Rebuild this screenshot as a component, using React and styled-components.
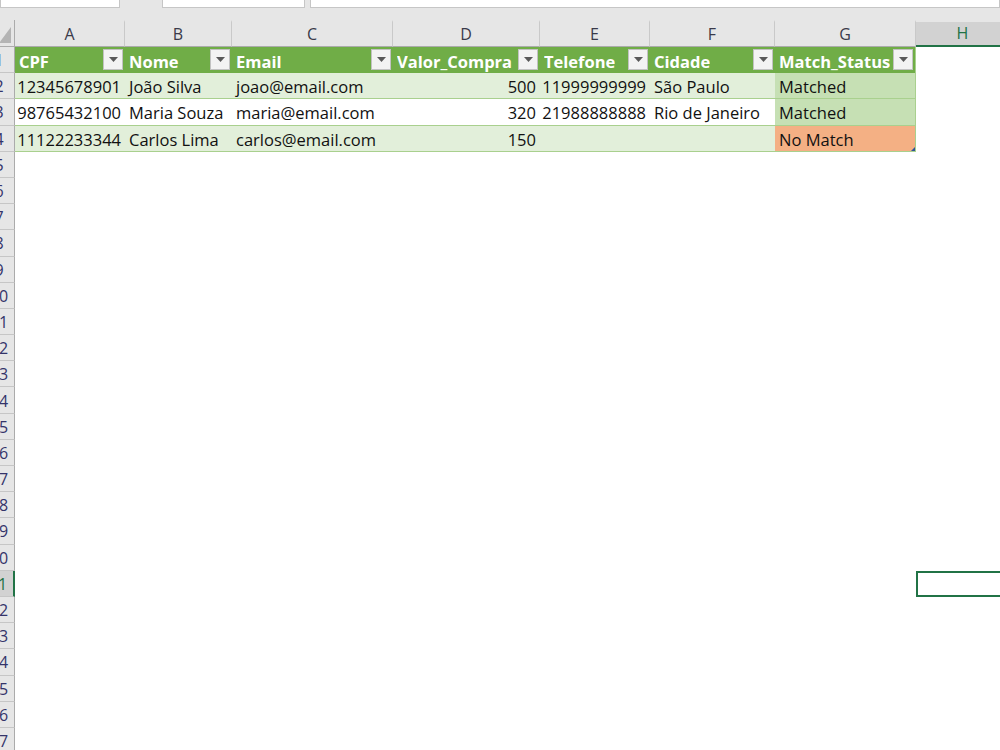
import styled, { createGlobalStyle } from "styled-components";

const GlobalStyle = createGlobalStyle`
  body {
    margin: 0;
    background: #ffffff;
    font-family: "Open Sans", "Liberation Sans", sans-serif;
  }
  * {
    box-sizing: border-box;
  }
`;

const COLUMNS = [
  { name: "A", width: 110 },
  { name: "B", width: 107 },
  { name: "C", width: 161 },
  { name: "D", width: 147 },
  { name: "E", width: 110 },
  { name: "F", width: 125 },
  { name: "G", width: 141 },
  { name: "H", width: 94 },
];

const TABLE_HEADERS = [
  "CPF",
  "Nome",
  "Email",
  "Valor_Compra",
  "Telefone",
  "Cidade",
  "Match_Status",
];

const TABLE_ROWS = [
  ["12345678901", "João Silva", "joao@email.com", "500", "11999999999", "São Paulo", "Matched"],
  ["98765432100", "Maria Souza", "maria@email.com", "320", "21988888888", "Rio de Janeiro", "Matched"],
  ["11122233344", "Carlos Lima", "carlos@email.com", "150", "", "", "No Match"],
];

// numbers sit on the right like excel does
const NUMERIC = [true, false, false, true, true, false, false];

const ROW_COUNT = 27;
const ACTIVE_ROW = 21;
const ACTIVE_COL = "H";

const Page = styled.div`
  width: 1000px;
  height: 750px;
  overflow: hidden;
  background: #ffffff;
`;

const TopStrip = styled.div`
  display: flex;
  align-items: flex-start;
  height: 20px;
  background: #e6e6e6;
`;

const Box = styled.div`
  height: 8px;
  width: ${(p) => (p.$width ? `${p.$width}px` : "auto")};
  flex: ${(p) => (p.$grow ? 1 : "none")};
  margin-left: ${(p) => p.$gap || 0}px;
  background: #ffffff;
  border: 1px solid #c6c6c6;
  border-top: none;
`;

const Sheet = styled.div`
  display: grid;
  grid-template-columns: 15px ${COLUMNS.map((c) => `${c.width}px`).join(" ")};
  grid-template-rows: 27px repeat(${ROW_COUNT}, 26.2px);
  width: 1010px;
`;

const Corner = styled.div`
  position: relative;
  background: #e6e6e6;
  border-right: 1px solid #ababab;
  border-bottom: 1px solid #ababab;

  svg {
    position: absolute;
    right: 3px;
    bottom: 3px;
  }
`;

const ColHeader = styled.div`
  display: flex;
  align-items: center;
  justify-content: center;
  padding-bottom: 1px;
  font-size: 16px;
  color: ${(p) => (p.$active ? "#217346" : "#3a3a4a")};
  background: ${(p) => (p.$active ? "#d2d2d2" : "#e6e6e6")};
  border-right: 1px solid ${(p) => (p.$active ? "#d2d2d2" : "#c9c9c9")};
  border-bottom: ${(p) => (p.$active ? "2px solid #217346" : "1px solid #ababab")};
  border-top: 2px solid #e6e6e6;
`;

const RowHeader = styled.div`
  display: flex;
  align-items: center;
  justify-content: flex-end;
  overflow: hidden;
  padding-top: 1px;
  font-size: 16px;
  color: ${(p) => (p.$active ? "#217346" : "#34346a")};
  background: ${(p) => (p.$active ? "#d2d2d2" : "#e6e6e6")};
  border-bottom: 1px solid #c6c6c6;
  border-right: ${(p) => (p.$active ? "2px solid #217346" : "1px solid #ababab")};
`;

const RowLabel = styled.span`
  flex: none;
  width: 30px;
  text-align: center;
`;

const Cell = styled.div`
  position: relative;
  display: flex;
  align-items: center;
  justify-content: ${(p) => (p.$numeric ? "flex-end" : "flex-start")};
  padding: 2px 4px 0 4px;
  font-size: 16.5px;
  color: #111111;
  white-space: nowrap;
  overflow: hidden;
  background: ${(p) => p.$bg || "#ffffff"};
  border-bottom: ${(p) => (p.$table ? "1px solid #a9d08e" : "none")};
  border-right: ${(p) => (p.$edge ? "1px solid #a9d08e" : "none")};
`;

const HeaderCell = styled.div`
  display: flex;
  align-items: flex-start;
  justify-content: space-between;
  padding: 0 2px 0 4px;
  background: #70ad47;
  border-right: ${(p) => (p.$edge ? "1px solid #a9d08e" : "none")};
`;

const HeaderText = styled.span`
  align-self: center;
  padding-top: 2px;
  font-size: 16.5px;
  font-weight: 700;
  color: #ffffff;
  white-space: nowrap;
  overflow: hidden;
`;

const FilterButton = styled.div`
  flex: none;
  display: flex;
  align-items: center;
  justify-content: center;
  width: 20px;
  height: 21px;
  margin-top: 2px;
  background: #f3f3f3;
  border: 1px solid #c2c2c2;
`;

const SelectedCell = styled.div`
  background: #ffffff;
  border: 2px solid #217346;
`;

const ResizeHandle = styled.div`
  position: absolute;
  right: 0;
  bottom: 0;
  width: 0;
  height: 0;
  border-left: 4px solid transparent;
  border-bottom: 4px solid #2f5597;
`;

const DropArrow = () => (
  <svg width="9" height="5" viewBox="0 0 9 5">
    <polygon points="0,0 9,0 4.5,5" fill="#595959" />
  </svg>
);

const SheetRow = ({ row }) => {
  const isActive = row === ACTIVE_ROW;
  const cells = [];

  if (row === 1) {
    TABLE_HEADERS.forEach((h, i) => {
      cells.push(
        <HeaderCell key={h} $edge={i === 6}>
          <HeaderText>{h}</HeaderText>
          <FilterButton>
            <DropArrow />
          </FilterButton>
        </HeaderCell>,
      );
    });
    cells.push(<Cell key="H" />);
  } else if (row <= 4) {
    const data = TABLE_ROWS[row - 2];
    const band = row % 2 === 0 ? "#e2efda" : "#ffffff";
    data.forEach((value, i) => {
      let bg = band;
      if (i === 6) bg = value === "No Match" ? "#f4b084" : "#c6e0b4";
      cells.push(
        <Cell key={i} $bg={bg} $numeric={NUMERIC[i]} $table $edge={i === 6}>
          {value}
          {row === 4 && i === 6 ? <ResizeHandle /> : null}
        </Cell>,
      );
    });
    cells.push(<Cell key="H" />);
  } else {
    COLUMNS.forEach((c) => {
      if (isActive && c.name === ACTIVE_COL) {
        cells.push(<SelectedCell key={c.name} />);
      } else {
        cells.push(<Cell key={c.name} />);
      }
    });
  }

  return (
    <>
      <RowHeader $active={isActive}>
        <RowLabel>{row}</RowLabel>
      </RowHeader>
      {cells}
    </>
  );
};

export default function App() {
  const rows = Array.from({ length: ROW_COUNT }, (_, i) => i + 1);

  return (
    <Page>
      <GlobalStyle />
      <TopStrip>
        <Box $width={120} />
        <Box $width={143} $gap={42} />
        <Box $grow $gap={5} />
      </TopStrip>
      <Sheet>
        <Corner>
          <svg width="12" height="16" viewBox="0 0 12 16">
            <polygon points="0,16 12,16 12,0" fill="#b4b4b4" />
          </svg>
        </Corner>
        {COLUMNS.map((c) => (
          <ColHeader key={c.name} $active={c.name === ACTIVE_COL}>
            {c.name}
          </ColHeader>
        ))}
        {rows.map((r) => (
          <SheetRow key={r} row={r} />
        ))}
      </Sheet>
    </Page>
  );
}
